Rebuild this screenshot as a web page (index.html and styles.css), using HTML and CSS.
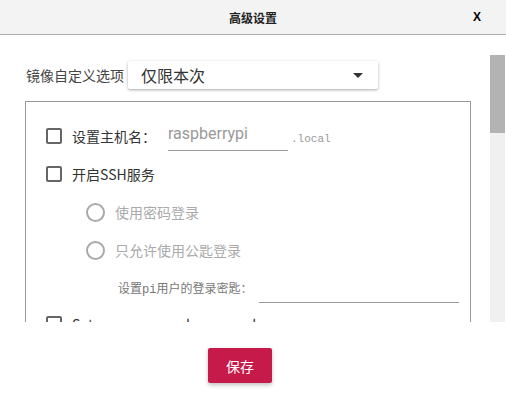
FILE: index.html
```html
<!DOCTYPE html>
<html lang="zh-CN">

<head>
    <meta charset="UTF-8">
    <meta name="viewport" content="width=device-width, initial-scale=1.0">
    <title>高级设置</title>
    <link rel="stylesheet" href="styles.css">
</head>

<body>
    <div class="header">
        <span class="title">高级设置</span>
        <span class="close">X</span>
    </div>

    <div class="panel">
        <div class="scroll">
            <div class="select-row">
                <span class="select-label">镜像自定义选项</span>
                <div class="select">
                    <span>仅限本次</span>
                    <span class="arrow"></span>
                </div>
            </div>

            <div class="group">
                <div class="row">
                    <span class="check"></span>
                    <span class="text">设置主机名：</span>
                    <span class="field host">raspberrypi</span>
                    <span class="suffix">.local</span>
                </div>
                <div class="row">
                    <span class="check"></span>
                    <span class="text">开启SSH服务</span>
                </div>
                <div class="row sub">
                    <span class="radio"></span>
                    <span class="text muted">使用密码登录</span>
                </div>
                <div class="row sub">
                    <span class="radio"></span>
                    <span class="text muted">只允许使用公匙登录</span>
                </div>
                <div class="row key">
                    <span class="small-label">设置pi用户的登录密匙：</span>
                    <span class="field long"></span>
                </div>
                <div class="row last">
                    <span class="check"></span>
                    <span class="text">Set username and password</span>
                </div>
            </div>
        </div>
        <div class="scrollbar">
            <div class="thumb"></div>
        </div>
    </div>

    <div class="footer">
        <button class="save">保存</button>
    </div>
</body>

</html>
```

FILE: styles.css
```css
body {
    margin: 0;
    width: 506px;
    height: 400px;
    overflow: hidden;
    background: #fff;
    font-family: "Noto Sans CJK SC", "Noto Sans", sans-serif;
    color: #333;
}

.header {
    height: 34px;
    background: #f3f3f3;
    border-bottom: 1px solid #adadad;
    display: flex;
    align-items: center;
    justify-content: center;
    position: relative;
}

.title {
    font-size: 12px;
    font-weight: bold;
    color: #222;
}

.close {
    position: absolute;
    right: 25px;
    top: 10px;
    font-family: "Liberation Sans", sans-serif;
    font-size: 12px;
    font-weight: bold;
    color: #000;
}

.panel {
    margin-top: 20px;
    height: 267px;
    display: flex;
}

.scroll {
    width: 490px;
    height: 267px;
    overflow: hidden;
}

.scrollbar {
    width: 15px;
    height: 267px;
    background: #f0f0f0;
}

.thumb {
    height: 78px;
    background: #b3b3b3;
}

.select-row {
    display: flex;
    align-items: center;
    padding: 6px 0 0 26px;
}

.select-label {
    font-size: 14px;
    color: #444;
}

.select {
    margin-left: 4px;
    width: 250px;
    height: 28px;
    box-sizing: border-box;
    padding: 0 15px 0 13px;
    background: #fff;
    border-radius: 2px;
    box-shadow: 0 1px 3px rgba(0, 0, 0, 0.35);
    display: flex;
    align-items: center;
    justify-content: space-between;
    font-size: 16px;
    color: #333;
}

.arrow {
    width: 0;
    height: 0;
    border-left: 5px solid transparent;
    border-right: 5px solid transparent;
    border-top: 5px solid #333;
}

.group {
    margin: 12px 0 20px 25px;
    width: 446px;
    box-sizing: border-box;
    border: 1px solid #999;
    padding: 15px 0 10px 20px;
}

.row {
    height: 38px;
    display: flex;
    align-items: center;
    gap: 10px;
}

.row.sub {
    padding-left: 40px;
}

.row.key {
    padding-left: 72px;
}

.row.last {
    margin-top: -2px;
}

.check {
    width: 16px;
    height: 16px;
    box-sizing: border-box;
    border: 2px solid #666;
    border-radius: 2px;
    flex-shrink: 0;
}

.radio {
    width: 19px;
    height: 19px;
    box-sizing: border-box;
    border: 2px solid #aaa;
    border-radius: 50%;
    flex-shrink: 0;
}

.text {
    font-size: 14px;
    color: #333;
}

.text.muted {
    color: #aaa;
}

.field {
    width: 120px;
    height: 30px;
    box-sizing: border-box;
    border-bottom: 1px solid #999;
    font-family: Roboto, sans-serif;
    font-size: 16px;
    color: #999;
    line-height: 26px;
}

.field.host {
    margin-left: 2px;
}

.field.long {
    width: 200px;
    margin-left: -3px;
}

.suffix {
    margin: 6px 0 0 -7px;
    font-family: "Liberation Mono", monospace;
    font-size: 11px;
    color: #999;
}

.small-label {
    font-family: "Liberation Mono", "Noto Sans CJK SC", monospace;
    font-size: 12px;
    color: #777;
}

.footer {
    padding: 26px 26px 0 0;
    display: flex;
    justify-content: center;
}

.save {
    width: 64px;
    height: 35px;
    border: none;
    border-radius: 2px;
    background: #c51a4a;
    color: #fff;
    font-family: "Noto Sans CJK SC", sans-serif;
    font-size: 14px;
    box-shadow: 0 2px 4px rgba(0, 0, 0, 0.25);
}
```
